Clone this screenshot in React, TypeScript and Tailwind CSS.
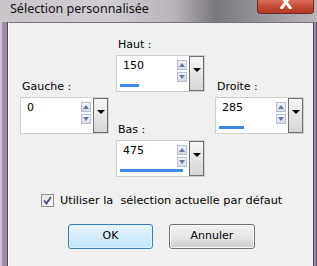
import { FC } from "react";

type Field = {
  label: string;
  value: string;
  bar: string;
};

const haut: Field = { label: "Haut :", value: "150", bar: "w-[19px]" };
const gauche: Field = { label: "Gauche :", value: "0", bar: "w-0" };
const droite: Field = { label: "Droite :", value: "285", bar: "w-[25px]" };
const bas: Field = { label: "Bas :", value: "475", bar: "w-[63px]" };

const SpinArrow: FC<{ up?: boolean }> = ({ up }) => (
  <div className="w-[10px] h-[10px] border border-[#b6bfd2] bg-gradient-to-b from-[#f2f4f9] to-[#d6dcea] flex items-center justify-center">
    <svg width="6" height="4" viewBox="0 0 6 4">
      {up ? (
        <path d="M0 4 L3 0 L6 4 Z" fill="#6677a0" />
      ) : (
        <path d="M0 0 L6 0 L3 4 Z" fill="#6677a0" />
      )}
    </svg>
  </div>
);

const Spinner: FC<{ field: Field }> = ({ field }) => (
  <div className="flex flex-col">
    <div className="h-[14px] leading-[14px] mb-[3px] pl-[2px]">{field.label}</div>
    <div className="w-[89px] h-[37px] border border-[#cfcfcf] bg-white flex">
      <div className="flex-1 flex flex-col">
        <div className="flex-1 flex">
          <span className="flex-1 pl-[6px] pt-[3px] leading-[13px]">{field.value}</span>
          <div className="flex flex-col gap-[2px] pt-[4px] pr-[2px]">
            <SpinArrow up />
            <SpinArrow />
          </div>
        </div>
        <div className="h-[3px] mb-[4px] ml-[3px] mr-[2px]">
          <div className={`h-full bg-[#3b8de4] ${field.bar}`} />
        </div>
      </div>
      <div className="w-[15px] border border-[#6f6f6f] bg-gradient-to-b from-[#f6f6f6] to-[#d6d6d6] flex justify-center pt-[11px]">
        <svg width="8" height="4" viewBox="0 0 8 4">
          <path d="M0 0 L8 0 L4 4 Z" fill="#000" />
        </svg>
      </div>
    </div>
  </div>
);

const App: FC = () => {
  return (
    <div className="w-[317px] h-[266px] overflow-hidden flex flex-col bg-[#f0f0f0] text-black font-['DejaVu_Sans',sans-serif] text-[11px]">
      {/* title bar */}
      <div className="h-[22px] flex items-start justify-between bg-[linear-gradient(90deg,#c8c4ca_0%,#d0ccd2_35%,#b7b3b9_55%,#7b777e_68%,#8f8b92_78%,#b9b5bb_100%)]">
        <span className="pl-[10px] pt-[1px] text-[12.5px] leading-[16px] font-['Noto_Sans',sans-serif] text-[#111]">
          Sélection personnalisée
        </span>
        <div className="mr-[3px] w-[57px] h-[14px] rounded-b-[4px] border border-t-0 border-[#6e2a22] bg-gradient-to-b from-[#d9705c] via-[#c54a33] to-[#b33a24] flex justify-center">
          <svg width="12" height="9" viewBox="0 0 12 9">
            <path d="M1 -5 L11 9 M11 -5 L1 9" stroke="#fff" strokeWidth="3" />
          </svg>
        </div>
      </div>

      <div className="flex-1 flex">
        {/* left frame */}
        <div className="w-[8px] bg-[#9f8ba6] border-l-2 border-l-[#cdc4d0] border-r border-r-[#4f4656]" />

        {/* client */}
        <div className="flex-1 border-t border-t-[#77737b] border-l border-l-white flex flex-col">
          <div className="flex pl-[11px]">
            <div className="pt-[57px]">
              <Spinner field={gauche} />
            </div>
            <div className="ml-[7px] pt-[15px] flex flex-col gap-[31px]">
              <Spinner field={haut} />
              <Spinner field={bas} />
            </div>
            <div className="ml-[10px] pt-[57px]">
              <Spinner field={droite} />
            </div>
          </div>

          <label className="mt-[17px] ml-[32px] flex items-center gap-[6px] h-[13px]">
            <span className="w-[13px] h-[13px] border border-[#8e8f8f] bg-gradient-to-br from-[#e4e4e4] to-[#fbfbfb] flex items-center justify-center">
              <svg width="9" height="9" viewBox="0 0 9 9">
                <path d="M1 4.5 L3.5 7.5 L8 1" stroke="#3d5186" strokeWidth="1.8" fill="none" />
              </svg>
            </span>
            <span className="leading-[13px] text-[11.3px]">Utiliser la&nbsp; sélection actuelle par défaut</span>
          </label>

          <div className="mt-[17px] ml-[59px] flex gap-[16px]">
            <button className="w-[85px] h-[25px] rounded-[3px] border border-[#3c7fb1] bg-gradient-to-b from-[#e9f6fd] via-[#d4eefb] to-[#bee6fd] shadow-[inset_0_0_0_1px_#def3fc]">
              OK
            </button>
            <button className="w-[86px] h-[25px] rounded-[3px] border border-[#707070] bg-gradient-to-b from-[#f2f2f2] via-[#e6e6e6] to-[#cfcfcf] shadow-[inset_0_0_0_1px_#fbfbfb]">
              Annuler
            </button>
          </div>
        </div>

        {/* right frame */}
        <div className="w-[4px] bg-[#9f8ba6] border-l border-l-[#4f4656] border-r border-r-[#5a5060]" />
      </div>
    </div>
  );
};

export default App;
